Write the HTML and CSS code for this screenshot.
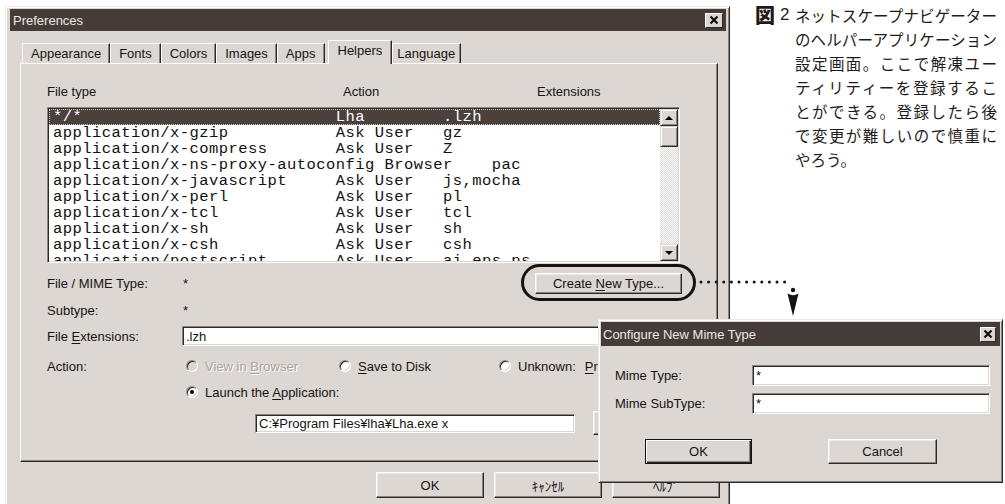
FILE: index.html
```html
<!DOCTYPE html>
<html lang="ja">
<head>
<meta charset="utf-8">
<title>Preferences</title>
<link rel="stylesheet" href="styles.css">
</head>
<body>
<div class="page">
  <section class="win prefs">
    <header class="titlebar">
      <span class="title">Preferences</span>
      <span class="close"><svg viewBox="0 0 18 15" width="18" height="15"><path d="M5.5 3.5 L12.5 10.5 M12.5 3.5 L5.5 10.5"/></svg></span>
    </header>

    <nav class="tabs">
      <span class="tab">Appearance</span>
      <span class="tab">Fonts</span>
      <span class="tab">Colors</span>
      <span class="tab">Images</span>
      <span class="tab">Apps</span>
      <span class="tab tab-active">Helpers</span>
      <span class="tab tab-lang">Language</span>
    </nav>

    <div class="panel">
      <div class="list-head"><span>File type</span><span>Action</span><span>Extensions</span></div>

      <div class="listbox">
        <div class="rows">
          <div class="row selected"><span class="c-type">*/*</span><span class="c-act">Lha</span><span>.lzh</span></div>
          <div class="row"><span class="c-type">application/x-gzip</span><span class="c-act">Ask User</span><span>gz</span></div>
          <div class="row"><span class="c-type">application/x-compress</span><span class="c-act">Ask User</span><span>Z</span></div>
          <div class="row"><span class="c-type">application/x-ns-proxy-autoconfig</span><span class="c-act">Browser</span><span>pac</span></div>
          <div class="row"><span class="c-type">application/x-javascript</span><span class="c-act">Ask User</span><span>js,mocha</span></div>
          <div class="row"><span class="c-type">application/x-perl</span><span class="c-act">Ask User</span><span>pl</span></div>
          <div class="row"><span class="c-type">application/x-tcl</span><span class="c-act">Ask User</span><span>tcl</span></div>
          <div class="row"><span class="c-type">application/x-sh</span><span class="c-act">Ask User</span><span>sh</span></div>
          <div class="row"><span class="c-type">application/x-csh</span><span class="c-act">Ask User</span><span>csh</span></div>
          <div class="row"><span class="c-type">application/postscript</span><span class="c-act">Ask User</span><span>ai,eps,ps</span></div>
        </div>
        <div class="vscroll">
          <span class="sbtn up"></span>
          <span class="thumb"></span>
          <span class="track"></span>
          <span class="sbtn down"></span>
        </div>
      </div>

      <div class="form">
        <div class="frow r-mime">
          <span class="lbl">File / MIME Type:</span><span>*</span>
          <button class="btn btn-create"><span>Create <u>N</u>ew Type...</span></button>
        </div>
        <div class="frow r-sub">
          <span class="lbl">Subtype:</span><span>*</span>
        </div>
        <div class="frow r-ext">
          <span class="lbl">File <u>E</u>xtensions:</span>
          <span class="field field-ext">.lzh</span>
        </div>
        <div class="frow r-action">
          <span class="lbl lbl-action">Action:</span>
          <span class="opt opt-view disabled"><span class="radio"></span><span>View in <u>B</u>rowser</span></span>
          <span class="opt opt-save"><span class="radio"></span><span><u>S</u>ave to Disk</span></span>
          <span class="opt"><span class="radio"></span><span>Unknown:</span><span class="prompt"><u>P</u>rompt User</span></span>
        </div>
        <div class="frow r-launch">
          <span class="opt"><span class="radio on"></span><span>Launch the <u>A</u>pplication:</span></span>
        </div>
        <div class="frow r-path">
          <span class="field field-path">C:¥Program Files¥lha¥Lha.exe x</span>
          <button class="btn btn-browse"><span>Browse...</span></button>
        </div>
      </div>
    </div>

    <div class="btnrow">
      <button class="btn btn-main">OK</button>
      <button class="btn btn-main jp">ｷｬﾝｾﾙ</button>
      <button class="btn btn-main jp">ﾍﾙﾌﾟ</button>
    </div>
  </section>

  <aside class="caption">
    <div class="fig-no"><b class="zu">図</b><span class="num">2</span></div>
    <div class="fig-text">
      <p>ネットスケープナビゲーター</p>
      <p>のヘルパーアプリケーション</p>
      <p>設定画面。ここで解凍ユー</p>
      <p>ティリティーを登録するこ</p>
      <p>とができる。登録したら後</p>
      <p>で変更が難しいので慎重に</p>
      <p class="last">やろう。</p>
    </div>
  </aside>
</div>

<section class="win dialog">
  <header class="titlebar">
    <span class="title">Configure New Mime Type</span>
    <span class="close"><svg viewBox="0 0 16 15" width="16" height="15"><path d="M4.5 3.5 L11.5 10.5 M11.5 3.5 L4.5 10.5"/></svg></span>
  </header>
  <div class="dlg-body">
    <div class="drow"><span class="dlbl">Mime Type:</span><span class="field">*</span></div>
    <div class="drow"><span class="dlbl">Mime SubType:</span><span class="field">*</span></div>
    <div class="dbtns">
      <button class="btn btn-dlg default">OK</button>
      <button class="btn btn-dlg btn-cancel">Cancel</button>
    </div>
  </div>
</section>

<svg class="callout" width="1005" height="504" viewBox="0 0 1005 504">
  <rect x="522.5" y="265.5" width="172" height="34" rx="17" fill="none" stroke="#141414" stroke-width="3"/>
  <path d="M701 282 H792" fill="none" stroke="#141414" stroke-width="3" stroke-linecap="round" stroke-dasharray="0 7.6"/>
  <circle cx="793" cy="290" r="2.2" fill="#141414"/>
  <path d="M787.5 293.5 Q793 297 798.5 293.5 L793 316 Z" fill="#141414"/>
</svg>
</body>
</html>
```

FILE: styles.css
```css
:root {
  --face: #dcd7d3;
  --hi: #ffffff;
  --light: #ece8e5;
  --shadow: #8c8480;
  --dark: #2e2826;
  --title: #453b38;
}

* { box-sizing: border-box; }

body {
  margin: 0;
  width: 1005px;
  height: 504px;
  overflow: hidden;
  position: relative;
  background: #fff;
  font-family: "Liberation Sans", Arial, sans-serif;
  font-size: 13px;
  color: #161313;
}

u { text-decoration-thickness: 1px; text-underline-offset: 2px; }

.page {
  display: flex;
  align-items: flex-start;
}

/* ---------- window frame ---------- */
.win {
  background: var(--face);
  border: 1px solid;
  border-color: var(--light) var(--dark) var(--dark) var(--light);
  box-shadow: inset 1px 1px var(--hi), inset -1px -1px var(--shadow);
}

.prefs {
  flex: none;
  width: 725px;
  height: 520px;
  margin: 6px 0 0 5px;
  padding: 2px 3px 0 4px;
}

.titlebar {
  height: 22px;
  background: var(--title);
  color: #ece8e4;
  display: flex;
  align-items: center;
  justify-content: space-between;
  padding: 0 3px;
}

.close {
  width: 18px;
  height: 15px;
  background: var(--face);
  border: 1px solid;
  border-color: var(--hi) var(--dark) var(--dark) var(--hi);
  display: flex;
}
.close svg { display: block; margin: -1px; }
.close path { stroke: #111; stroke-width: 2.2; fill: none; }

/* ---------- tabs ---------- */
.tabs {
  display: flex;
  align-items: flex-end;
  height: 23px;
  margin: 9px 0 0 12px;
}

.tab {
  height: 20px;
  display: flex;
  align-items: center;
  padding: 0 8px;
  background: var(--face);
  border-top: 1px solid var(--hi);
  border-left: 1px solid var(--hi);
  border-right: 1px solid var(--dark);
  box-shadow: inset -1px 0 var(--shadow);
}

.tab-active {
  position: relative;
  z-index: 1;
  height: 24px;
  margin: 0 0 -1px 3px;
  padding: 2px 9px 0;
  align-items: flex-start;
}

.tab-lang { padding: 0 5px 0 4px; }

/* ---------- panel ---------- */
.panel {
  height: 399px;
  margin: 0 8px 0 10px;
  padding: 20px 37px 0 26px;
  border-top: 1px solid var(--hi);
  border-left: 1px solid var(--hi);
  border-right: 1px solid var(--dark);
  border-bottom: 1px solid var(--dark);
  box-shadow: inset -1px -1px var(--shadow);
}

.list-head {
  display: grid;
  grid-template-columns: 296px 194px auto;
  height: 16px;
  line-height: 16px;
  margin-bottom: 7px;
}

.listbox {
  display: flex;
  height: 156px;
  padding: 1px;
  background: #fff;
  border: 1px solid;
  border-color: var(--shadow) var(--hi) var(--hi) var(--shadow);
  box-shadow: inset 1px 1px var(--dark), inset -1px -1px var(--face);
}

.rows {
  flex: 1;
  overflow: hidden;
  font-family: "Liberation Mono", "Courier New", monospace;
  font-size: 15.5px;
  letter-spacing: 0.45px;
  color: #111;
}

.row {
  height: 16px;
  line-height: 16px;
  padding-left: 4px;
  white-space: pre;
}

.row.selected {
  background: #4a403c;
  color: #fff;
  outline: 1px dotted #cfc8c4;
  outline-offset: -1px;
}

/* fixed character columns: type 28, action 10, one blank between */
.c-type { display: inline-block; min-width: 273px; margin-right: 9.75px; }
.c-act { display: inline-block; min-width: 97.5px; margin-right: 9.75px; }

.vscroll {
  width: 18px;
  display: flex;
  flex-direction: column;
}

.sbtn,
.thumb {
  flex: none;
  background: var(--face);
  border: 1px solid;
  border-color: var(--face) var(--dark) var(--dark) var(--face);
  box-shadow: inset 1px 1px var(--hi), inset -1px -1px var(--shadow);
}

.sbtn {
  height: 17px;
  display: flex;
  align-items: center;
  justify-content: center;
}
.sbtn::before {
  content: "";
  border-left: 4px solid transparent;
  border-right: 4px solid transparent;
}
.sbtn.up::before { border-bottom: 4px solid #000; }
.sbtn.down::before { border-top: 4px solid #000; }

.thumb { height: 21px; }

.track {
  flex: 1;
  background: repeating-conic-gradient(#fff 0 25%, var(--face) 0 50%) 0 0 / 2px 2px;
}

/* ---------- form below the list ---------- */
.form {
  display: flex;
  flex-direction: column;
}

.frow {
  display: flex;
  align-items: center;
}

.lbl { flex: none; width: 136px; }
.lbl-action { width: 139px; }

.r-mime { height: 22px; margin-top: 9px; }
.r-sub { height: 22px; margin-top: 5px; }
.r-ext { height: 20px; margin-top: 5px; }
.r-action { height: 22px; margin-top: 9px; }
.r-launch { height: 22px; margin-top: 4px; padding-left: 139px; }
.r-path { height: 24px; margin-top: 8px; }

.field {
  display: flex;
  align-items: center;
  height: 100%;
  padding: 0 3px;
  background: #fff;
  border: 1px solid;
  border-color: var(--shadow) var(--hi) var(--hi) var(--shadow);
  box-shadow: inset 1px 1px var(--dark), inset -1px -1px var(--face);
  white-space: nowrap;
}

.field-ext { width: 498px; margin-left: -1px; }
.field-path { width: 322px; height: 19px; margin-left: 208px; }

.opt {
  display: flex;
  align-items: center;
  white-space: nowrap;
}
.opt-view { width: 153px; }
.opt-save { width: 160px; }

.disabled { color: #aaa39f; text-shadow: 1px 1px #fff; }

.prompt { margin-left: 9px; }

.radio {
  position: relative;
  flex: none;
  width: 12px;
  height: 12px;
  margin-right: 7px;
  border-radius: 50%;
  background: #fff;
  border: 1px solid;
  border-color: var(--shadow) var(--hi) var(--hi) var(--shadow);
  box-shadow: inset 1px 1px var(--dark), inset -1px -1px var(--face);
}
.disabled .radio { background: var(--face); }
.radio.on::after {
  content: "";
  position: absolute;
  left: 3px;
  top: 3px;
  width: 4px;
  height: 4px;
  border-radius: 50%;
  background: #000;
}

/* ---------- push buttons ---------- */
.btn {
  font: inherit;
  color: #161313;
  padding: 0;
  background: var(--face);
  border: 1px solid;
  border-color: var(--hi) var(--dark) var(--dark) var(--hi);
  box-shadow: inset -1px -1px var(--shadow), inset 1px 1px var(--light);
  display: flex;
  align-items: center;
  justify-content: center;
  white-space: nowrap;
}

.btn-create { width: 147px; height: 21px; margin: 0 -2px 0 auto; }
.btn-browse { width: 87px; height: 24px; margin-left: 18px; }

.btnrow {
  display: flex;
  justify-content: flex-end;
  gap: 10px;
  margin: 10px 6px 0 0;
}

.btn-main { width: 108px; height: 26px; }
.jp { font-family: "Noto Sans CJK JP", sans-serif; }

/* ---------- caption ---------- */
.caption {
  display: flex;
  margin: 3px 0 0 25px;
  color: #1f1b1b;
}

.fig-no {
  flex: none;
  width: 40px;
  height: 24px;
  display: flex;
  align-items: center;
  gap: 5px;
}

.zu {
  font-family: "Noto Sans CJK JP", sans-serif;
  font-weight: 900;
  font-size: 20px;
  line-height: 24px;
}

.num {
  font-family: "Liberation Sans", Arial, sans-serif;
  font-size: 17px;
  line-height: 24px;
}

.fig-text {
  flex: none;
  width: 202px;
  font-family: "Noto Sans CJK JP", sans-serif;
  font-size: 15.5px;
  line-height: 24px;
}

.fig-text p {
  margin: 0;
  text-align: justify;
  text-align-last: justify;
  text-justify: inter-character;
}
.fig-text p.last { text-align-last: left; }

/* ---------- dialog window ---------- */
.dialog {
  position: absolute;
  left: 598px;
  top: 319px;
  z-index: 6;
  width: 405px;
  height: 164px;
  padding: 2px;
}

.dialog .titlebar { height: 24px; padding: 0 4px 0 2px; }
.dialog .close { width: 16px; }

.dlg-body { padding: 19px 10px 0 14px; }

.drow {
  display: flex;
  align-items: center;
  height: 21px;
}
.drow + .drow { margin-top: 7px; }
.dlbl { flex: none; width: 137px; }
.drow .field { flex: 1; }

.dbtns {
  display: flex;
  gap: 76px;
  margin-top: 25px;
  padding-left: 30px;
}

.btn-dlg { width: 107px; height: 25px; }
.btn-cancel { width: 109px; }
.btn.default {
  border-color: #111;
  box-shadow: inset 1px 1px var(--hi), inset -1px -1px var(--dark), inset -2px -2px var(--shadow);
}

/* ---------- callout drawn over the window ---------- */
.callout {
  position: absolute;
  left: 0;
  top: 0;
  z-index: 5;
  pointer-events: none;
}
```
